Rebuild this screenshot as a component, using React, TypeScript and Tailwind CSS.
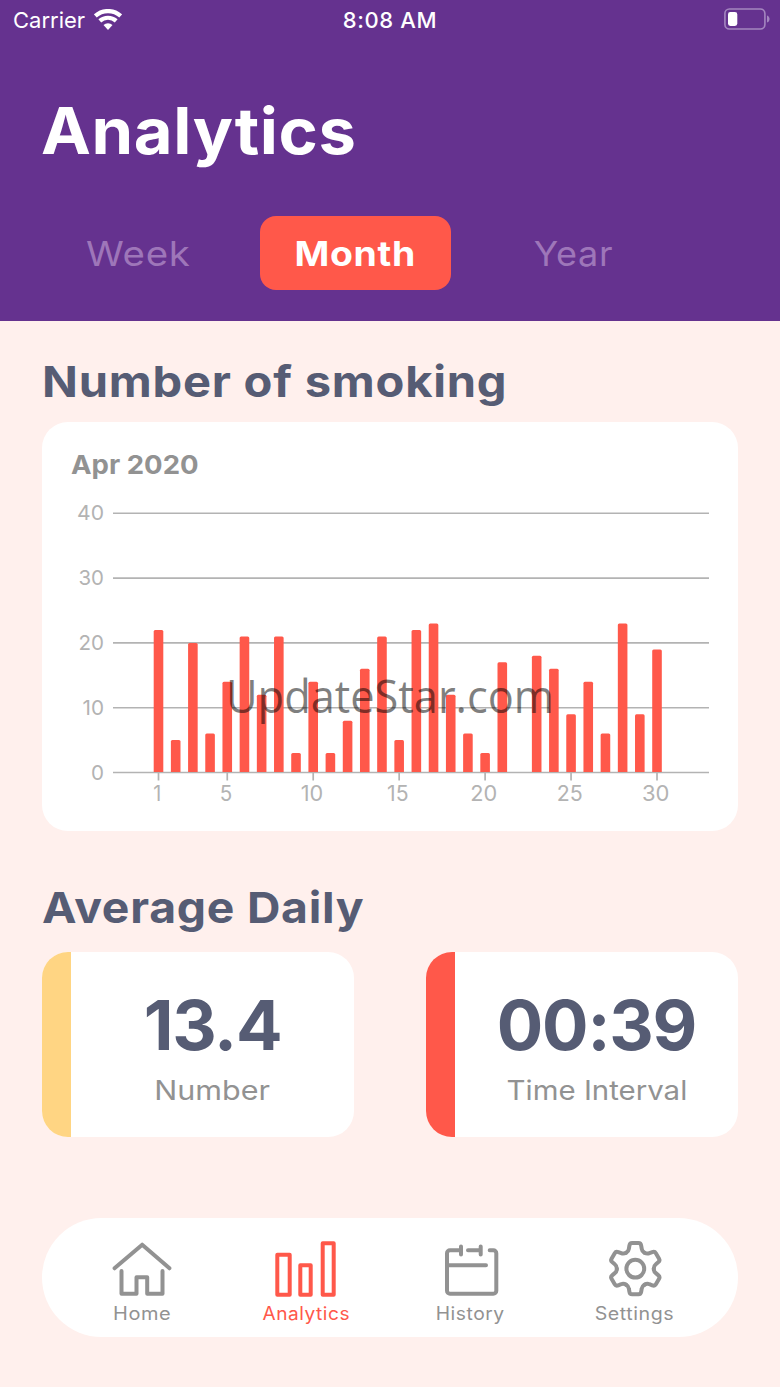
import clsx from "clsx";

const TABS = [
  { label: "Week", className: "scale-x-[1.13]" },
  { label: "Month", className: "scale-x-[1.1]" },
  { label: "Year", className: "scale-x-[1.06]" },
];

// cigarettes per day, April 2020
const DAYS = [
  22, 5, 20, 6, 14, 21, 12, 21, 3, 14, 3, 8, 16, 21, 5, 22, 23, 12, 6, 3, 17, 0, 18, 16, 9, 14, 6, 23, 9, 19,
];
const Y_TICKS = [
  { value: 40, width: 27 },
  { value: 30, width: 25.5 },
  { value: 20, width: 25.5 },
  { value: 10, width: 21.5 },
  { value: 0, width: 13 },
];
const X_TICKS = [
  { day: 1, width: 8 },
  { day: 5, width: 12.5 },
  { day: 10, width: 22.5 },
  { day: 15, width: 21.5 },
  { day: 20, width: 27 },
  { day: 25, width: 26 },
  { day: 30, width: 27.5 },
];

const BASELINE = 282.5;
const UNIT = 6.48;
const dayX = (day: number) => 116.5 + (day - 1) * 17.19;

function WifiIcon() {
  return (
    <svg width="28" height="21" viewBox="0 0 28 21" fill="none" stroke="white" strokeWidth="4.2" className="relative -top-px">
      <path d="M1.3 6.9A19 19 0 0 1 26.7 6.9" />
      <path d="M5.8 11.9A12.3 12.3 0 0 1 22.2 11.9" />
      <path d="M14 21L9.5 16A6.7 6.7 0 0 1 18.5 16Z" fill="white" stroke="none" />
    </svg>
  );
}

function BatteryIcon() {
  return (
    <svg width="46" height="22" viewBox="0 0 46 22" fill="none" className="relative -top-px">
      <rect x="0.9" y="1" width="40" height="20" rx="4.5" stroke="#a486bf" strokeWidth="1.6" />
      <path d="M43 7.5C46.4 8.5 46.4 13.5 43 14.5Z" fill="#a486bf" />
      <rect x="4" y="4" width="9.3" height="14" rx="2.4" fill="white" />
    </svg>
  );
}

function StatusBar() {
  return (
    <div className="grid h-10 grid-cols-3 items-center pl-[10px] pr-[10px] text-[22px] text-white">
      <div className="flex items-center gap-[9px] pl-[3px]">
        <span>Carrier</span>
        <WifiIcon />
      </div>
      <span className="text-center font-medium tracking-[0.6px]">8:08 AM</span>
      <div className="flex justify-end">
        <BatteryIcon />
      </div>
    </div>
  );
}

function SmokingChart() {
  return (
    <svg width="696" height="341" viewBox="0 0 696 341" className="block">
      {Y_TICKS.map(({ value, width }) => {
        const y = BASELINE - value * UNIT;
        return (
          <g key={value}>
            <line x1="71" x2="667" y1={y} y2={y} stroke="#b3b3b3" strokeWidth="1.6" />
            <text
              x="62"
              y={y + 7}
              textAnchor="end"
              textLength={width}
              lengthAdjust="spacingAndGlyphs"
              fontSize="20.5"
              fill="#b3b3b3"
            >
              {value}
            </text>
          </g>
        );
      })}
      {DAYS.map((v, i) =>
        v > 0 ? (
          <path
            key={i}
            d={`M${dayX(i + 1) - 4.8} ${BASELINE - 0.5}v${-(v * UNIT - 2)}q0 -1.5 1.5 -1.5h6.6q1.5 0 1.5 1.5v${v * UNIT - 2}z`}
            fill="#ff584a"
          />
        ) : null
      )}
      {X_TICKS.map(({ day, width }) => (
        <g key={day}>
          <line x1={dayX(day)} x2={dayX(day)} y1={BASELINE} y2={BASELINE + 8} stroke="#b3b3b3" strokeWidth="1.7" />
          <text
            x={dayX(day) - 1.3}
            y={BASELINE + 28.5}
            textAnchor="middle"
            textLength={width}
            lengthAdjust="spacingAndGlyphs"
            fontSize="21"
            fill="#b3b3b3"
          >
            {day}
          </text>
        </g>
      ))}
      <text
        x="184"
        y="222.5"
        fontSize="45"
        textLength="328"
        lengthAdjust="spacingAndGlyphs"
        className="fill-black/50 font-['Open_Sans',sans-serif]"
      >
        UpdateStar.com
      </text>
    </svg>
  );
}

type StatCardProps = {
  value: string;
  label: string;
  stripe: string;
  labelClass: string;
};

function StatCard({ value, label, stripe, labelClass }: StatCardProps) {
  return (
    <div className="flex h-[185px] w-[312px] overflow-hidden rounded-[26px] bg-white">
      <div className={clsx("w-[29px] shrink-0", stripe)} />
      <div className="flex flex-1 flex-col items-center pt-[33px]">
        <p className="text-[69px] font-bold leading-[80px] tracking-[-1.2px] text-[#565c74]">{value}</p>
        <p className={clsx("mt-[9px] text-[27px] leading-[34px] text-[#929292]", labelClass)}>{label}</p>
      </div>
    </div>
  );
}

function HomeIcon() {
  return (
    <>
      <path d="M4.5 28.3L32.2 4.7L59.5 28.3" />
      <path d="M11.5 31V53.7H26.5V37.3H37.2V53.7H52.5V31" />
    </>
  );
}

function AnalyticsIcon() {
  return (
    <>
      <rect x="3.3" y="14.7" width="12.4" height="40" />
      <rect x="26.3" y="25.3" width="10.4" height="29.4" />
      <rect x="48.7" y="3.3" width="11" height="51.4" />
    </>
  );
}

function HistoryIcon() {
  return (
    <>
      <path d="M22 10.3H11a3 3 0 0 0-3 3V50.7a3 3 0 0 0 3 3H54.3a3 3 0 0 0 3-3V13.3a3 3 0 0 0-3-3h-3.6" />
      <path d="M22 6.5V14.5M41.7 6.5V14.5M29 10.3H41.7M8 25.3H47" />
    </>
  );
}

function SettingsIcon() {
  return (
    <g transform="translate(32.3 28.7)">
      <circle r="8.9" />
      {[0, 60, 120, 180, 240, 300].map((a) => (
        <path
          key={a}
          transform={`rotate(${a})`}
          d="M-9.2 -16C-7.5 -17 -6.6 -18.3 -6.4 -20L-5.9 -23Q-5.5 -25.6 -3.2 -25.6H3.2Q5.5 -25.6 5.9 -23L6.4 -20C6.6 -18.3 7.5 -17 9.2 -16"
        />
      ))}
    </g>
  );
}

const NAV = [
  { label: "Home", icon: HomeIcon, active: false, className: "scale-x-[1.11]" },
  { label: "Analytics", icon: AnalyticsIcon, active: true, className: "scale-x-[1.06]" },
  { label: "History", icon: HistoryIcon, active: false, className: "scale-x-[1.07]" },
  { label: "Settings", icon: SettingsIcon, active: false, className: "scale-x-[1.09]" },
];

export default function App() {
  return (
    <div className="h-[1387px] w-[780px] overflow-hidden bg-[#fff0ed] font-['Inter',sans-serif]">
      {/* Header */}
      <header className="h-[321px] bg-[#65328f]">
        <StatusBar />
        <h1 className="ml-[41px] mt-[51px] origin-left scale-x-[1.045] text-[64px] font-bold leading-[80px] tracking-[0.6px] text-white">
          Analytics
        </h1>
        <div className="ml-[29px] mt-[45px] grid w-[653px] grid-cols-3 justify-items-center">
          {TABS.map((t) => (
            <button
              key={t.label}
              className={clsx(
                "h-[74px] w-[191px] rounded-2xl text-[34px] tracking-[0.6px]",
                t.label === "Month" ? "bg-[#ff584a] font-bold text-white" : "text-[#9e76b9]"
              )}
            >
              <span className={clsx("inline-block", t.className)}>{t.label}</span>
            </button>
          ))}
        </div>
      </header>

      <main className="px-[42px]">
        <h2 className="origin-left scale-x-[1.095] pt-[32px] text-[43px] font-bold leading-[56px] tracking-[0.7px] text-[#565c74]">
          Number of smoking
        </h2>
        <section className="mt-[13px] h-[409px] rounded-[26px] bg-white">
          <h3 className="ml-[29px] h-[68px] origin-left scale-x-[1.06] pt-[27px] text-[26px] font-bold leading-[32px] text-[#929292]">
            Apr 2020
          </h3>
          <SmokingChart />
        </section>

        <h2 className="mt-[48px] origin-left scale-x-[1.077] text-[43px] font-bold leading-[56px] tracking-[0.7px] text-[#565c74]">
          Average Daily
        </h2>
        <div className="mt-[17px] flex justify-between">
          <StatCard value="13.4" label="Number" stripe="bg-[#ffd583]" labelClass="scale-x-[1.13]" />
          <StatCard value="00:39" label="Time Interval" stripe="bg-[#ff584a]" labelClass="scale-x-[1.09]" />
        </div>

        {/* Tab bar */}
        <nav className="mt-[81px] grid h-[119px] grid-cols-4 rounded-full bg-white pl-[18px] pr-[21px]">
          {NAV.map((n) => (
            <a
              key={n.label}
              className={clsx("flex flex-col items-center pt-[22px]", n.active ? "text-[#ff584a]" : "text-[#929292]")}
            >
              <svg
                width="64"
                height="60"
                viewBox="0 0 64 60"
                fill="none"
                stroke="currentColor"
                strokeWidth="4"
                strokeLinecap="round"
                strokeLinejoin="round"
              >
                <n.icon />
              </svg>
              <span className={clsx("text-[18px] leading-[28px] tracking-[0.5px]", n.className)}>{n.label}</span>
            </a>
          ))}
        </nav>
      </main>
    </div>
  );
}
